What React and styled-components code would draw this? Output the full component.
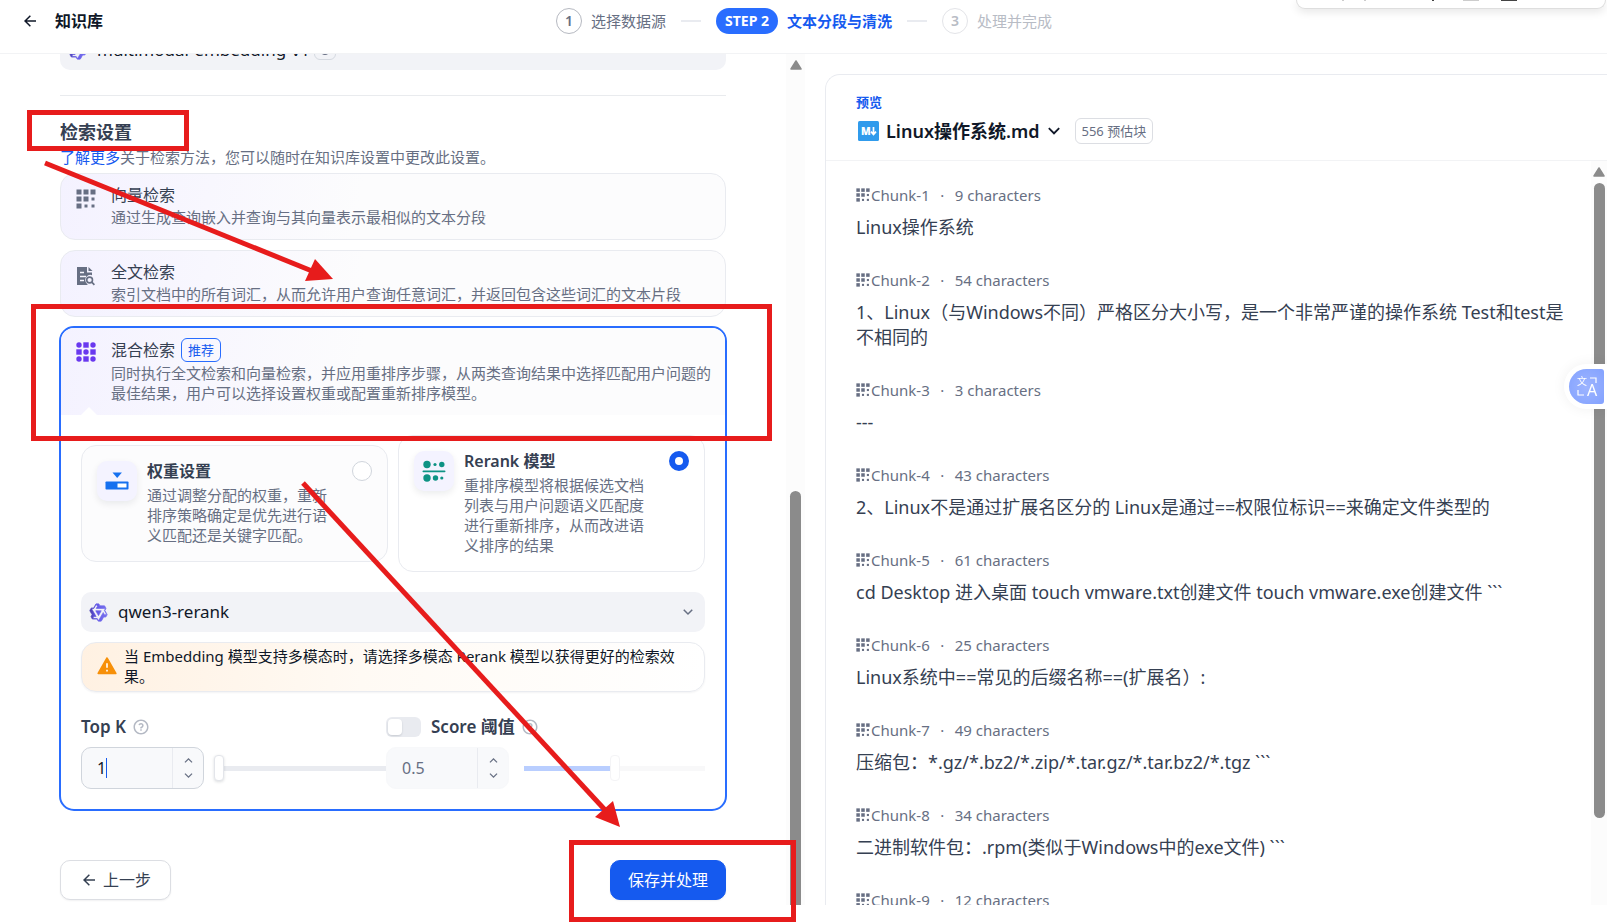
import React, { useState } from 'react';
import styled, { createGlobalStyle, css } from 'styled-components';
import {
  RiArrowLeftLine,
  RiArrowDownSLine,
  RiArrowUpSLine,
  RiAlertFill,
  RiQuestionLine,
} from 'react-icons/ri';

const chunks = [
  { count: 9, text: 'Linux操作系统' },
  { count: 54, text: '1、Linux（与Windows不同）严格区分大小写，是一个非常严谨的操作系统 Test和test是不相同的' },
  { count: 3, text: '---' },
  { count: 43, text: '2、Linux不是通过扩展名区分的 Linux是通过==权限位标识==来确定文件类型的' },
  { count: 61, text: 'cd Desktop 进入桌面 touch vmware.txt创建文件 touch vmware.exe创建文件 ```' },
  { count: 25, text: 'Linux系统中==常见的后缀名称==(扩展名）:' },
  { count: 49, text: '压缩包：*.gz/*.bz2/*.zip/*.tar.gz/*.tar.bz2/*.tgz ```' },
  { count: 34, text: '二进制软件包：.rpm(类似于Windows中的exe文件) ```' },
  { count: 12, text: '' },
];

/* ---------- icons ---------- */

const GridIcon = ({ size = 20 }) => (
  <svg width={size} height={size} viewBox="0 0 20 20" fill="#676f83" aria-hidden="true">
    {[[0, 0, 5], [7, 0, 5], [14, 0, 5], [0, 7, 5], [7, 7, 5], [15, 8, 3], [0, 14, 5], [8, 15, 3], [15, 15, 3]].map(
      ([x, y, s]) => <rect key={`${x}-${y}`} x={x + 0.5} y={y + 0.5} width={s} height={s} />
    )}
  </svg>
);

const HybridIcon = () => (
  <svg width="20" height="20" viewBox="0 0 20 20" fill="#6938ef" aria-hidden="true">
    {[3, 10, 17].map((y, row) =>
      [3, 10, 17].map((x, col) =>
        (row + col) % 2 === 0
          ? <circle key={`${x}-${y}`} cx={x} cy={y} r="2.7" />
          : <rect key={`${x}-${y}`} x={x - 2.7} y={y - 2.7} width="5.4" height="5.4" />
      )
    )}
  </svg>
);

const FileSearchIcon = () => (
  <svg width="20" height="20" viewBox="0 0 20 20" fill="none" aria-hidden="true">
    <path d="M1 1h10v5.5h5V9.2a5 5 0 0 0-6 7.2l1.8 2.6H1z" fill="#676f83" />
    <path d="M12.5 1l4 4h-4z" fill="#676f83" />
    <path d="M4 6.5h4M4 10.5h6M4 14.5h4" stroke="#f7f6fe" strokeWidth="1.5" />
    <circle cx="13.6" cy="14" r="2.9" stroke="#676f83" strokeWidth="1.6" />
    <path d="M15.8 16.2l2.6 2.6" stroke="#676f83" strokeWidth="1.7" />
  </svg>
);

const WeightIcon = () => (
  <svg width="24" height="24" viewBox="0 0 24 24" aria-hidden="true">
    <path d="M7.5 3.5h9.4L12.2 9z" fill="#1570ef" />
    <rect x="0.5" y="12.5" width="23" height="8" rx="0.8" fill="#1570ef" />
    <rect x="12.5" y="14.5" width="9" height="4" fill="#fff" />
  </svg>
);

const RerankIcon = () => (
  <svg width="24" height="24" viewBox="0 0 24 24" fill="#0e9384" aria-hidden="true">
    <circle cx="5" cy="5.5" r="3.7" />
    <circle cx="13" cy="5.5" r="1.6" />
    <circle cx="19.8" cy="5.5" r="2.7" />
    <rect x="0.5" y="11.4" width="23" height="1.8" rx="0.9" />
    <circle cx="5" cy="19" r="3.7" />
    <circle cx="13.5" cy="19" r="2.7" />
    <circle cx="19.8" cy="19" r="1.6" />
  </svg>
);

const QwenIcon = () => (
  <svg width="19" height="19" viewBox="0 0 24 24" aria-hidden="true">
    <defs>
      <linearGradient id="qwen" x1="0" x2="1">
        <stop offset="0" stopColor="#4a3fb0" />
        <stop offset="0.4" stopColor="#6358e8" />
        <stop offset="1" stopColor="#7a74ee" />
      </linearGradient>
    </defs>
    <path
      fill="url(#qwen)"
      stroke="url(#qwen)"
      strokeWidth="0.8"
      fillRule="evenodd"
      d="M12.604 1.34c.393.69.784 1.382 1.174 2.075a.18.18 0 00.157.091h5.552c.174 0 .322.11.446.327l1.454 2.57c.19.337.24.478.024.837-.26.43-.513.864-.76 1.3l-.367.658c-.106.196-.223.28-.04.512l2.652 4.637c.172.301.111.494-.043.77-.437.785-.882 1.564-1.335 2.34-.159.272-.352.375-.68.37-.777-.016-1.552-.01-2.327.016a.099.099 0 00-.081.05 575.097 575.097 0 01-2.705 4.74c-.169.293-.38.363-.725.364-.997.003-2.002.004-3.017.002a.537.537 0 01-.465-.271l-1.335-2.323a.09.09 0 00-.083-.049H4.982c-.285.03-.553-.001-.805-.092l-1.603-2.77a.543.543 0 01-.002-.54l1.207-2.12a.198.198 0 000-.197 550.951 550.951 0 01-1.875-3.272l-.79-1.395c-.16-.31-.173-.496.095-.965.465-.813.927-1.625 1.387-2.436.132-.234.304-.334.584-.335a338.3 338.3 0 012.589-.001.124.124 0 00.107-.063l2.806-4.895a.488.488 0 01.422-.246c.524-.001 1.053 0 1.583-.006L11.704 1c.341-.003.724.032.9.34zm-3.432.403a.06.06 0 00-.052.03L6.254 6.788a.157.157 0 01-.135.078H3.253c-.056 0-.07.025-.041.074l5.81 10.156c.025.042.013.062-.034.063l-2.795.015a.218.218 0 00-.2.116l-1.32 2.31c-.044.078-.021.118.068.118l5.716.008c.046 0 .08.02.104.061l1.403 2.454c.046.081.092.082.139 0l5.006-8.76.783-1.382a.055.055 0 01.096 0l1.424 2.53a.122.122 0 00.107.062l2.763-.02a.04.04 0 00.035-.02.041.041 0 000-.04l-2.9-5.086a.108.108 0 010-.113l.293-.507 1.12-1.977c.024-.041.012-.062-.035-.062H9.2c-.059 0-.073-.026-.043-.077l1.434-2.505a.107.107 0 000-.114L9.225 1.774a.06.06 0 00-.053-.031zm6.29 8.02c.046 0 .058.02.034.06l-.832 1.465-2.613 4.585a.056.056 0 01-.05.029.058.058 0 01-.05-.029L8.498 9.841c-.02-.034-.01-.052.028-.054l.216-.012 6.722-.012z"
    />
  </svg>
);

const MarkdownIcon = () => (
  <svg width="21" height="20" viewBox="0 0 21 20" aria-hidden="true">
    <rect width="21" height="20" rx="1.5" fill="#309bec" />
    <text x="3" y="14" fill="#fff" fontFamily="Open Sans" fontSize="10" fontWeight="800">M</text>
    <path d="M15.5 6v7M13 10.6l2.5 2.8 2.5-2.8" stroke="#fff" strokeWidth="1.7" fill="none" />
  </svg>
);

const TranslateIcon = () => (
  <svg width="21" height="21" viewBox="0 0 21 21" fill="none" stroke="#fff" strokeWidth="1.2" aria-hidden="true">
    <path d="M13 2h6v5M1 14v5h6" />
    <text x="0" y="9" fill="#fff" stroke="none" fontFamily="Noto Sans CJK SC" fontSize="10">文</text>
    <text x="10" y="20" fill="#fff" stroke="none" fontFamily="Noto Sans" fontSize="16">A</text>
  </svg>
);

const ScrollArrow = () => (
  <svg width="12" height="10" viewBox="0 0 12 10" aria-hidden="true">
    <path d="M6 1l5 8H1z" fill="#8b8b8b" stroke="#8b8b8b" strokeWidth="1.5" strokeLinejoin="round" />
  </svg>
);

// red frames and arrows drawn over the page
const Markup = () => (
  <MarkupLayer width="800" height="923" fill="none" stroke="#e71c1c" strokeWidth="5" aria-hidden="true">
    <rect x="29.5" y="112.5" width="157" height="36" />
    <rect x="33.5" y="306.5" width="736" height="132" />
    <rect x="571.5" y="842.5" width="222" height="77" />
    <path d="M45 163L312 271" />
    <path d="M333 279l-18-20-10 22z" fill="#e71c1c" stroke="none" />
    <path d="M303 483L606 811" />
    <path d="M620 827l-7-26-18 16z" fill="#e71c1c" stroke="none" />
  </MarkupLayer>
);

const NumberStepper = ({ label, value, onChange, disabled, focused }) => (
  <NumberBox $disabled={disabled}>
    <NumberEntry>
      <NumberInput aria-label={label} value={value} disabled={disabled} onChange={(e) => onChange(e.target.value)} />
      {focused && <Caret />}
    </NumberEntry>
    <StepButtons>
      <StepButton aria-label="增加" disabled={disabled}><RiArrowUpSLine size={15} /></StepButton>
      <StepButton aria-label="减少" disabled={disabled}><RiArrowDownSLine size={15} /></StepButton>
    </StepButtons>
  </NumberBox>
);

const App = () => {
  const [rerankMode, setRerankMode] = useState('model');
  const [topK, setTopK] = useState('1');
  const [score, setScore] = useState('0.5');
  const [scoreEnabled, setScoreEnabled] = useState(false);

  return (
    <>
      <GlobalStyle />
      <Page>
        <Header>
          <BackLink href="#">
            <RiArrowLeftLine size={18} />
            知识库
          </BackLink>
          <Steps>
            <Step>
              <StepNumber>1</StepNumber>选择数据源
            </Step>
            <StepDash />
            <Step $active>
              <StepPill>STEP 2</StepPill>文本分段与清洗
            </Step>
            <StepDash />
            <Step $muted>
              <StepNumber $muted>3</StepNumber>处理并完成
            </Step>
          </Steps>
          <FloatingToolbar>
            <ToolTick $gap={45} />
            <ToolTick $gap={20} />
            <ToolTick $gap={66} $dark />
            <ToolTick $gap={29} $wide />
            <ToolTick $gap={22} $wide $dark />
          </FloatingToolbar>
        </Header>

        <Main>
          <SettingsPane>
            <SettingsScroll>
              <ModelSelect>
                <QwenIcon />
                multimodal-embedding-v1
                <ModelTag><RiQuestionLine size={12} /></ModelTag>
              </ModelSelect>
              <Divider />
              <SectionTitle>检索设置</SectionTitle>
              <Hint><a href="#">了解更多</a>关于检索方法，您可以随时在知识库设置中更改此设置。</Hint>

              <Methods>
                <MethodCard>
                  <GridIcon />
                  <div>
                    <MethodTitle>向量检索</MethodTitle>
                    <Description>通过生成查询嵌入并查询与其向量表示最相似的文本分段</Description>
                  </div>
                </MethodCard>
                <MethodCard>
                  <FileSearchIcon />
                  <div>
                    <MethodTitle>全文检索</MethodTitle>
                    <Description>索引文档中的所有词汇，从而允许用户查询任意词汇，并返回包含这些词汇的文本片段</Description>
                  </div>
                </MethodCard>

                <ActiveMethod>
                  <ActiveHead>
                    <HybridIcon />
                    <div>
                      <MethodTitle $tall>
                        混合检索 <Recommended>推荐</Recommended>
                      </MethodTitle>
                      <Description>
                        同时执行全文检索和向量检索，并应用重排序步骤，从两类查询结果中选择匹配用户问题的最佳结果，用户可以选择设置权重或配置重新排序模型。
                      </Description>
                    </div>
                  </ActiveHead>
                  <ActiveBody>
                    <Options>
                      <OptionCard $filled>
                        <OptionIcon><WeightIcon /></OptionIcon>
                        <OptionText>
                          <OptionTitle>权重设置</OptionTitle>
                          <Description>通过调整分配的权重，重新排序策略确定是优先进行语义匹配还是关键字匹配。</Description>
                        </OptionText>
                        <Radio
                          type="radio"
                          name="rerank"
                          checked={rerankMode === 'weight'}
                          onChange={() => setRerankMode('weight')}
                        />
                      </OptionCard>
                      <OptionCard>
                        <OptionIcon><RerankIcon /></OptionIcon>
                        <OptionText>
                          <OptionTitle>Rerank 模型</OptionTitle>
                          <Description>重排序模型将根据候选文档列表与用户问题语义匹配度进行重新排序，从而改进语义排序的结果</Description>
                        </OptionText>
                        <Radio
                          type="radio"
                          name="rerank"
                          checked={rerankMode === 'model'}
                          onChange={() => setRerankMode('model')}
                        />
                      </OptionCard>
                    </Options>

                    <ModelSelect>
                      <QwenIcon />
                      qwen3-rerank
                      <SelectChevron><RiArrowDownSLine size={18} /></SelectChevron>
                    </ModelSelect>

                    <Warning>
                      <RiAlertFill size={22} color="#f79009" />
                      <WarningText>当 Embedding 模型支持多模态时，请选择多模态 Rerank 模型以获得更好的检索效果。</WarningText>
                    </Warning>

                    <Params>
                      <Param>
                        <ParamLabel>Top K <RiQuestionLine size={18} /></ParamLabel>
                        <ParamControl>
                          <NumberStepper label="Top K" value={topK} onChange={setTopK} focused />
                          <Range
                            type="range"
                            aria-label="Top K"
                            min="1"
                            max="10"
                            value={topK}
                            onChange={(e) => setTopK(e.target.value)}
                          />
                        </ParamControl>
                      </Param>
                      <Param>
                        <ParamLabel>
                          <Switch
                            type="checkbox"
                            aria-label="Score 阈值"
                            checked={scoreEnabled}
                            onChange={(e) => setScoreEnabled(e.target.checked)}
                          />
                          Score 阈值 <RiQuestionLine size={18} />
                        </ParamLabel>
                        <ParamControl>
                          <NumberStepper label="Score" value={score} onChange={setScore} disabled={!scoreEnabled} />
                          <Range
                            type="range"
                            aria-label="Score"
                            min="0"
                            max="1"
                            step="0.01"
                            value={score}
                            disabled={!scoreEnabled}
                            onChange={(e) => setScore(e.target.value)}
                          />
                        </ParamControl>
                      </Param>
                    </Params>
                  </ActiveBody>
                </ActiveMethod>
              </Methods>

              <Actions>
                <Button><RiArrowLeftLine size={18} />上一步</Button>
                <Button $primary>保存并处理</Button>
              </Actions>
            </SettingsScroll>
            <ScrollTrack>
              <ScrollArrow />
              <ScrollThumb $atEnd />
            </ScrollTrack>
          </SettingsPane>

          <PreviewPane>
            <PreviewCard>
              <PreviewHead>
                <PreviewLabel>预览</PreviewLabel>
                <FileRow>
                  <MarkdownIcon />
                  <FileName>Linux操作系统.md</FileName>
                  <RiArrowDownSLine size={22} />
                  <Estimate>556 预估块</Estimate>
                </FileRow>
              </PreviewHead>
              <PreviewBody>
                <ChunkList>
                  {chunks.map((chunk, i) => (
                    <li key={i}>
                      <ChunkMeta>
                        <GridIcon size={14} />
                        <span>Chunk-{i + 1}</span>
                        <Dot>·</Dot>
                        <span>{chunk.count} characters</span>
                      </ChunkMeta>
                      <ChunkText>{chunk.text}</ChunkText>
                    </li>
                  ))}
                </ChunkList>
                <ScrollTrack $narrow>
                  <ScrollArrow />
                  <ScrollThumb />
                </ScrollTrack>
              </PreviewBody>
            </PreviewCard>
          </PreviewPane>
        </Main>
      </Page>
      <TranslateTab>
        <TranslateButton aria-label="翻译"><TranslateIcon /></TranslateButton>
      </TranslateTab>
      <Markup />
    </>
  );
};

// Styled components
const GlobalStyle = createGlobalStyle`
  * {
    box-sizing: border-box;
  }

  body {
    margin: 0;
    background: #fff;
    color: #101828;
    font-family: 'Noto Sans', 'Noto Sans CJK SC', sans-serif;
    font-size: 15px;
    line-height: 20px;
    overflow: hidden;
  }

  button, input {
    font: inherit;
    color: inherit;
  }

  svg {
    flex: none;
  }
`;

const Page = styled.div`
  display: flex;
  flex-direction: column;
  height: 100vh;
  padding-bottom: 18px;
`;

const Header = styled.header`
  position: relative;
  display: grid;
  grid-template-columns: 1fr auto 1fr;
  align-items: center;
  padding: 8px 20px 19px 21px;
  border-bottom: 1px solid #f2f3f5;
`;

const BackLink = styled.a`
  display: flex;
  align-items: center;
  gap: 16px;
  font-size: 16px;
  font-weight: 600;
  color: #101828;
  text-decoration: none;
`;

const Steps = styled.div`
  display: flex;
  align-items: center;
  gap: 15px;
`;

const Step = styled.div`
  display: flex;
  align-items: center;
  gap: 9px;
  font-weight: ${({ $active }) => ($active ? 600 : 400)};
  color: ${({ $active, $muted }) => ($active ? '#155aef' : $muted ? '#b8bcc5' : '#676f83')};
`;

const StepNumber = styled.span`
  display: flex;
  align-items: center;
  justify-content: center;
  width: 26px;
  height: 26px;
  border: 1px solid ${({ $muted }) => ($muted ? '#e3e4e8' : '#b6b9c1')};
  border-radius: 50%;
  font-size: 14px;
  font-weight: 600;
`;

const StepPill = styled.span`
  padding: 3px 9px;
  border-radius: 13px;
  background: #296dff;
  color: #fff;
  font-size: 14px;
  font-weight: 700;
`;

const StepDash = styled.span`
  width: 20px;
  height: 2px;
  background: #e9ebf0;
`;

const FloatingToolbar = styled.div`
  position: absolute;
  top: 0;
  right: 1px;
  display: flex;
  align-items: flex-start;
  width: 310px;
  height: 9px;
  border: 1px solid #dedede;
  border-top: 0;
  border-radius: 0 0 9px 9px;
  background: #fff;
  box-shadow: 0 3px 8px rgba(0, 0, 0, 0.1);
`;

const ToolTick = styled.span`
  width: ${({ $wide }) => ($wide ? '16px' : '2px')};
  height: 1px;
  margin-left: ${({ $gap }) => $gap}px;
  background: ${({ $dark }) => ($dark ? '#444' : '#ccc')};
`;

const Main = styled.main`
  display: grid;
  grid-template-columns: 805fr 802fr;
  grid-template-rows: minmax(0, 1fr);
  flex: 1;
  min-height: 0;
`;

const SettingsPane = styled.section`
  display: flex;
  min-width: 0;
`;

// stays scrolled to its end, so the top rows are cut off
const SettingsScroll = styled.div`
  display: flex;
  flex: 1;
  flex-direction: column;
  justify-content: flex-end;
  min-width: 0;
  padding: 0 60px 5px;
  overflow: hidden;

  & > * {
    flex: none;
  }
`;

const ModelSelect = styled.div`
  display: flex;
  align-items: center;
  gap: 10px;
  height: 40px;
  padding: 0 8px;
  border-radius: 10px;
  background: #f2f3f7;
  font-size: 17px;
`;

const ModelTag = styled.span`
  display: flex;
  align-items: center;
  justify-content: center;
  width: 22px;
  height: 20px;
  margin-left: -6px;
  border: 1px solid #d5d9e0;
  border-radius: 6px;
  color: #676f83;
`;

const SelectChevron = styled.span`
  display: flex;
  margin-left: auto;
  color: #676f83;
`;

const Divider = styled.hr`
  height: 1px;
  margin: 25px 0 24px;
  border: 0;
  background: #e9ebee;
`;

const SectionTitle = styled.h2`
  margin: 0;
  font-size: 18px;
  line-height: 25px;
  font-weight: 600;
  color: #354052;
`;

const Hint = styled.p`
  margin: 2px 0 6px;
  color: #676f83;

  a {
    color: #155aef;
    text-decoration: none;
  }
`;

const Methods = styled.div`
  display: flex;
  flex-direction: column;
  gap: 10px;
`;

const headFill = css`
  display: flex;
  align-items: flex-start;
  gap: 15px;
  background: linear-gradient(100deg, #f4f2ff 0%, #fcfcfd 45%);

  & > svg {
    margin-top: 4px;
  }
`;

const MethodCard = styled.div`
  ${headFill}
  padding: 11px 15px 12px;
  border: 1px solid #e9ebf0;
  border-radius: 15px;
`;

const MethodTitle = styled.div`
  display: flex;
  align-items: center;
  gap: 6px;
  height: ${({ $tall }) => ($tall ? '24px' : '20px')};
  margin-bottom: ${({ $tall }) => ($tall ? '1px' : '2px')};
  font-size: 16px;
  color: #354052;
`;

const Description = styled.div`
  color: #676f83;
`;

const Recommended = styled.span`
  padding: 1px 6px;
  border: 1px solid #296dff;
  border-radius: 6px;
  color: #155aef;
  font-size: 13px;
`;

const ActiveMethod = styled.div`
  margin: -1px -1px 0;
  border: 2px solid #296dff;
  border-radius: 15px;
  background: #fff;
`;

const ActiveHead = styled.div`
  ${headFill}
  position: relative;
  padding: 10px 10px 12px 15px;
  border-radius: 13px 13px 0 0;

  &::after {
    content: '';
    position: absolute;
    bottom: 0;
    left: 20px;
    border: 8px solid transparent;
    border-top: 0;
    border-bottom-color: #fff;
  }
`;

const ActiveBody = styled.div`
  padding: 20px;
`;

const Options = styled.div`
  display: grid;
  grid-template-columns: 1fr 1fr;
  gap: 10px;
  align-items: center;
  margin-bottom: 20px;
`;

const OptionCard = styled.label`
  display: flex;
  align-items: flex-start;
  padding: 15px 15px 16px;
  border: 1px solid #e9ebf0;
  border-radius: 15px;
  background: ${({ $filled }) => ($filled ? '#fcfcfd' : '#fff')};
`;

const OptionIcon = styled.span`
  display: flex;
  align-items: center;
  justify-content: center;
  width: 40px;
  height: 40px;
  margin-right: 10px;
  border-radius: 10px;
  background: #f4f3ff;
  box-shadow: 0 3px 7px rgba(16, 24, 40, 0.08);
`;

const OptionText = styled.div`
  flex: 1;
  margin-right: 15px;
`;

const OptionTitle = styled.div`
  margin-bottom: 4px;
  font-size: 16px;
  font-weight: 600;
  color: #354052;
`;

const Radio = styled.input`
  appearance: none;
  width: 20px;
  height: 20px;
  margin: 0;
  border: 1px solid #d0d5dc;
  border-radius: 50%;
  background: #fff;

  &:checked {
    border: 6px solid #155aef;
  }
`;

const Warning = styled.div`
  display: flex;
  align-items: center;
  gap: 6px;
  margin-top: 10px;
  padding: 3px 14px 5px;
  border: 1px solid #e9ebf0;
  border-radius: 15px;
  background: linear-gradient(92deg, #fff1e2 0%, #fffaf4 45%, #fff 100%);
  box-shadow: 0 1px 2px rgba(16, 24, 40, 0.05);
`;

const WarningText = styled.p`
  flex: 1;
  margin: 0;
`;

const Params = styled.div`
  display: grid;
  grid-template-columns: 305fr 319fr;
  margin-top: 25px;
`;

const Param = styled.div`
  min-width: 0;
`;

const ParamLabel = styled.div`
  display: flex;
  align-items: center;
  gap: 6px;
  margin-bottom: 10px;
  font-size: 17px;
  font-weight: 600;
  color: #354052;

  svg {
    color: #b4b9c4;
  }
`;

const ParamControl = styled.div`
  display: flex;
  align-items: center;
  gap: 15px;
`;

const Switch = styled.input`
  appearance: none;
  width: 35px;
  height: 20px;
  margin: 0 4px 0 0;
  padding: 2px;
  border-radius: 6px;
  background: #e9ebf0;

  &::before {
    content: '';
    display: block;
    width: 14px;
    height: 16px;
    border-radius: 4px;
    background: #fff;
    box-shadow: 0 1px 2px rgba(16, 24, 40, 0.15);
  }

  &:checked {
    background: #155aef;
  }

  &:checked::before {
    margin-left: auto;
  }
`;

const NumberBox = styled.div`
  display: flex;
  flex: none;
  width: 123px;
  height: 42px;
  border: 1px solid ${({ $disabled }) => ($disabled ? '#f7f8fa' : '#d0d5dc')};
  border-radius: 10px;
  background: #f8f9fb;
  color: ${({ $disabled }) => ($disabled ? '#676f83' : '#101828')};
`;

const NumberEntry = styled.div`
  display: flex;
  flex: 1;
  align-items: center;
  padding-left: 15px;
`;

const NumberInput = styled.input`
  field-sizing: content;
  padding: 0;
  border: 0;
  outline: 0;
  background: none;
  font-size: 16px;
`;

const Caret = styled.span`
  width: 1px;
  height: 20px;
  background: #155aef;
`;

const StepButtons = styled.div`
  display: flex;
  flex-direction: column;
  justify-content: center;
  width: 31px;
  border-left: 1px solid #e9ebf0;
`;

const StepButton = styled.button`
  display: flex;
  justify-content: center;
  padding: 0;
  border: 0;
  background: none;
  color: #676f83;
`;

const Range = styled.input`
  appearance: none;
  flex: 1;
  min-width: 0;
  height: 26px;
  margin: 0 -5px;
  background: linear-gradient(#e9ebf0, #e9ebf0) center / calc(100% - 10px) 5px no-repeat;

  &::-webkit-slider-thumb {
    appearance: none;
    width: 10px;
    height: 26px;
    border: 1px solid #e3e5ea;
    border-radius: 4px;
    background: #fff;
    box-shadow: 0 1px 3px rgba(16, 24, 40, 0.15);
  }

  &:disabled {
    background-image: linear-gradient(90deg, #b9ceff 50%, #f8f8f9 50%);
  }

  &:disabled::-webkit-slider-thumb {
    border-color: #f4f4f6;
    box-shadow: none;
  }
`;

const Actions = styled.div`
  display: flex;
  justify-content: space-between;
  margin-top: 49px;
`;

const Button = styled.button`
  display: flex;
  align-items: center;
  gap: 5px;
  height: 40px;
  padding: ${({ $primary }) => ($primary ? '0 17px' : '0 19px')};
  border: 1px solid ${({ $primary }) => ($primary ? '#155aef' : '#dcdee3')};
  border-radius: 10px;
  background: ${({ $primary }) => ($primary ? '#155aef' : '#fff')};
  color: ${({ $primary }) => ($primary ? '#fff' : '#354052')};
  font-size: 16px;
  box-shadow: 0 1px 2px rgba(16, 24, 40, 0.06);
`;

const ScrollTrack = styled.div`
  display: flex;
  flex: none;
  flex-direction: column;
  align-items: center;
  gap: 6px;
  width: ${({ $narrow }) => ($narrow ? '16px' : '19px')};
  padding-top: 6px;
  background: #fcfcfc;
`;

const ScrollThumb = styled.div`
  width: 11px;
  height: ${({ $atEnd }) => ($atEnd ? '49%' : '86%')};
  margin-top: ${({ $atEnd }) => ($atEnd ? 'auto' : '0')};
  border-radius: ${({ $atEnd }) => ($atEnd ? '6px 6px 0 0' : '6px')};
  background: #8b8b8b;
`;

const PreviewPane = styled.section`
  min-width: 0;
  padding: 20px 0 0 20px;
`;

const PreviewCard = styled.div`
  display: flex;
  flex-direction: column;
  height: 100%;
  border: 1px solid #e9ebf0;
  border-width: 1px 0 0 1px;
  border-radius: 15px 0 0 0;
  overflow: hidden;
`;

const PreviewHead = styled.div`
  padding: 17px 30px 16px;
  border-bottom: 1px solid #f2f3f5;
`;

const PreviewLabel = styled.div`
  font-size: 13px;
  font-weight: 600;
  color: #155aef;
`;

const FileRow = styled.div`
  display: flex;
  align-items: center;
  margin: 6px 0 0 2px;
`;

const FileName = styled.h1`
  margin: 0 3px 0 7px;
  font-size: 18px;
  line-height: 25px;
  font-weight: 600;
`;

const Estimate = styled.span`
  margin-left: 10px;
  padding: 2px 6px;
  border: 1px solid #dcdee3;
  border-radius: 6px;
  color: #676f83;
  font-size: 13px;
`;

const PreviewBody = styled.div`
  display: flex;
  flex: 1;
  min-height: 0;
`;

const ChunkList = styled.ul`
  display: flex;
  flex: 1;
  flex-direction: column;
  gap: 30px;
  min-width: 0;
  margin: 0;
  padding: 24px 20px 0 30px;
  list-style: none;
  overflow: hidden;
`;

const ChunkMeta = styled.div`
  display: flex;
  align-items: center;
  gap: 1px;
  margin-bottom: 10px;
  color: #676f83;
`;

const Dot = styled.span`
  width: 23px;
  text-align: center;
`;

const ChunkText = styled.p`
  min-height: 25px;
  margin: 0;
  font-size: 18px;
  line-height: 25px;
  color: #354052;
`;

const TranslateTab = styled.div`
  position: fixed;
  top: 364px;
  right: 0;
  padding: 5px 3px 5px 5px;
  border-radius: 23px 0 0 23px;
  background: #fff;
  box-shadow: 0 0 14px rgba(0, 0, 0, 0.06);
`;

const TranslateButton = styled.button`
  display: flex;
  align-items: center;
  width: 35px;
  height: 35px;
  padding: 0 0 0 8px;
  border: 0;
  border-radius: 18px 3px 3px 18px;
  background: radial-gradient(#9db4ff, #83a2ff);
`;

const MarkupLayer = styled.svg`
  position: absolute;
  top: 0;
  left: 0;
  pointer-events: none;
`;

export default App;
